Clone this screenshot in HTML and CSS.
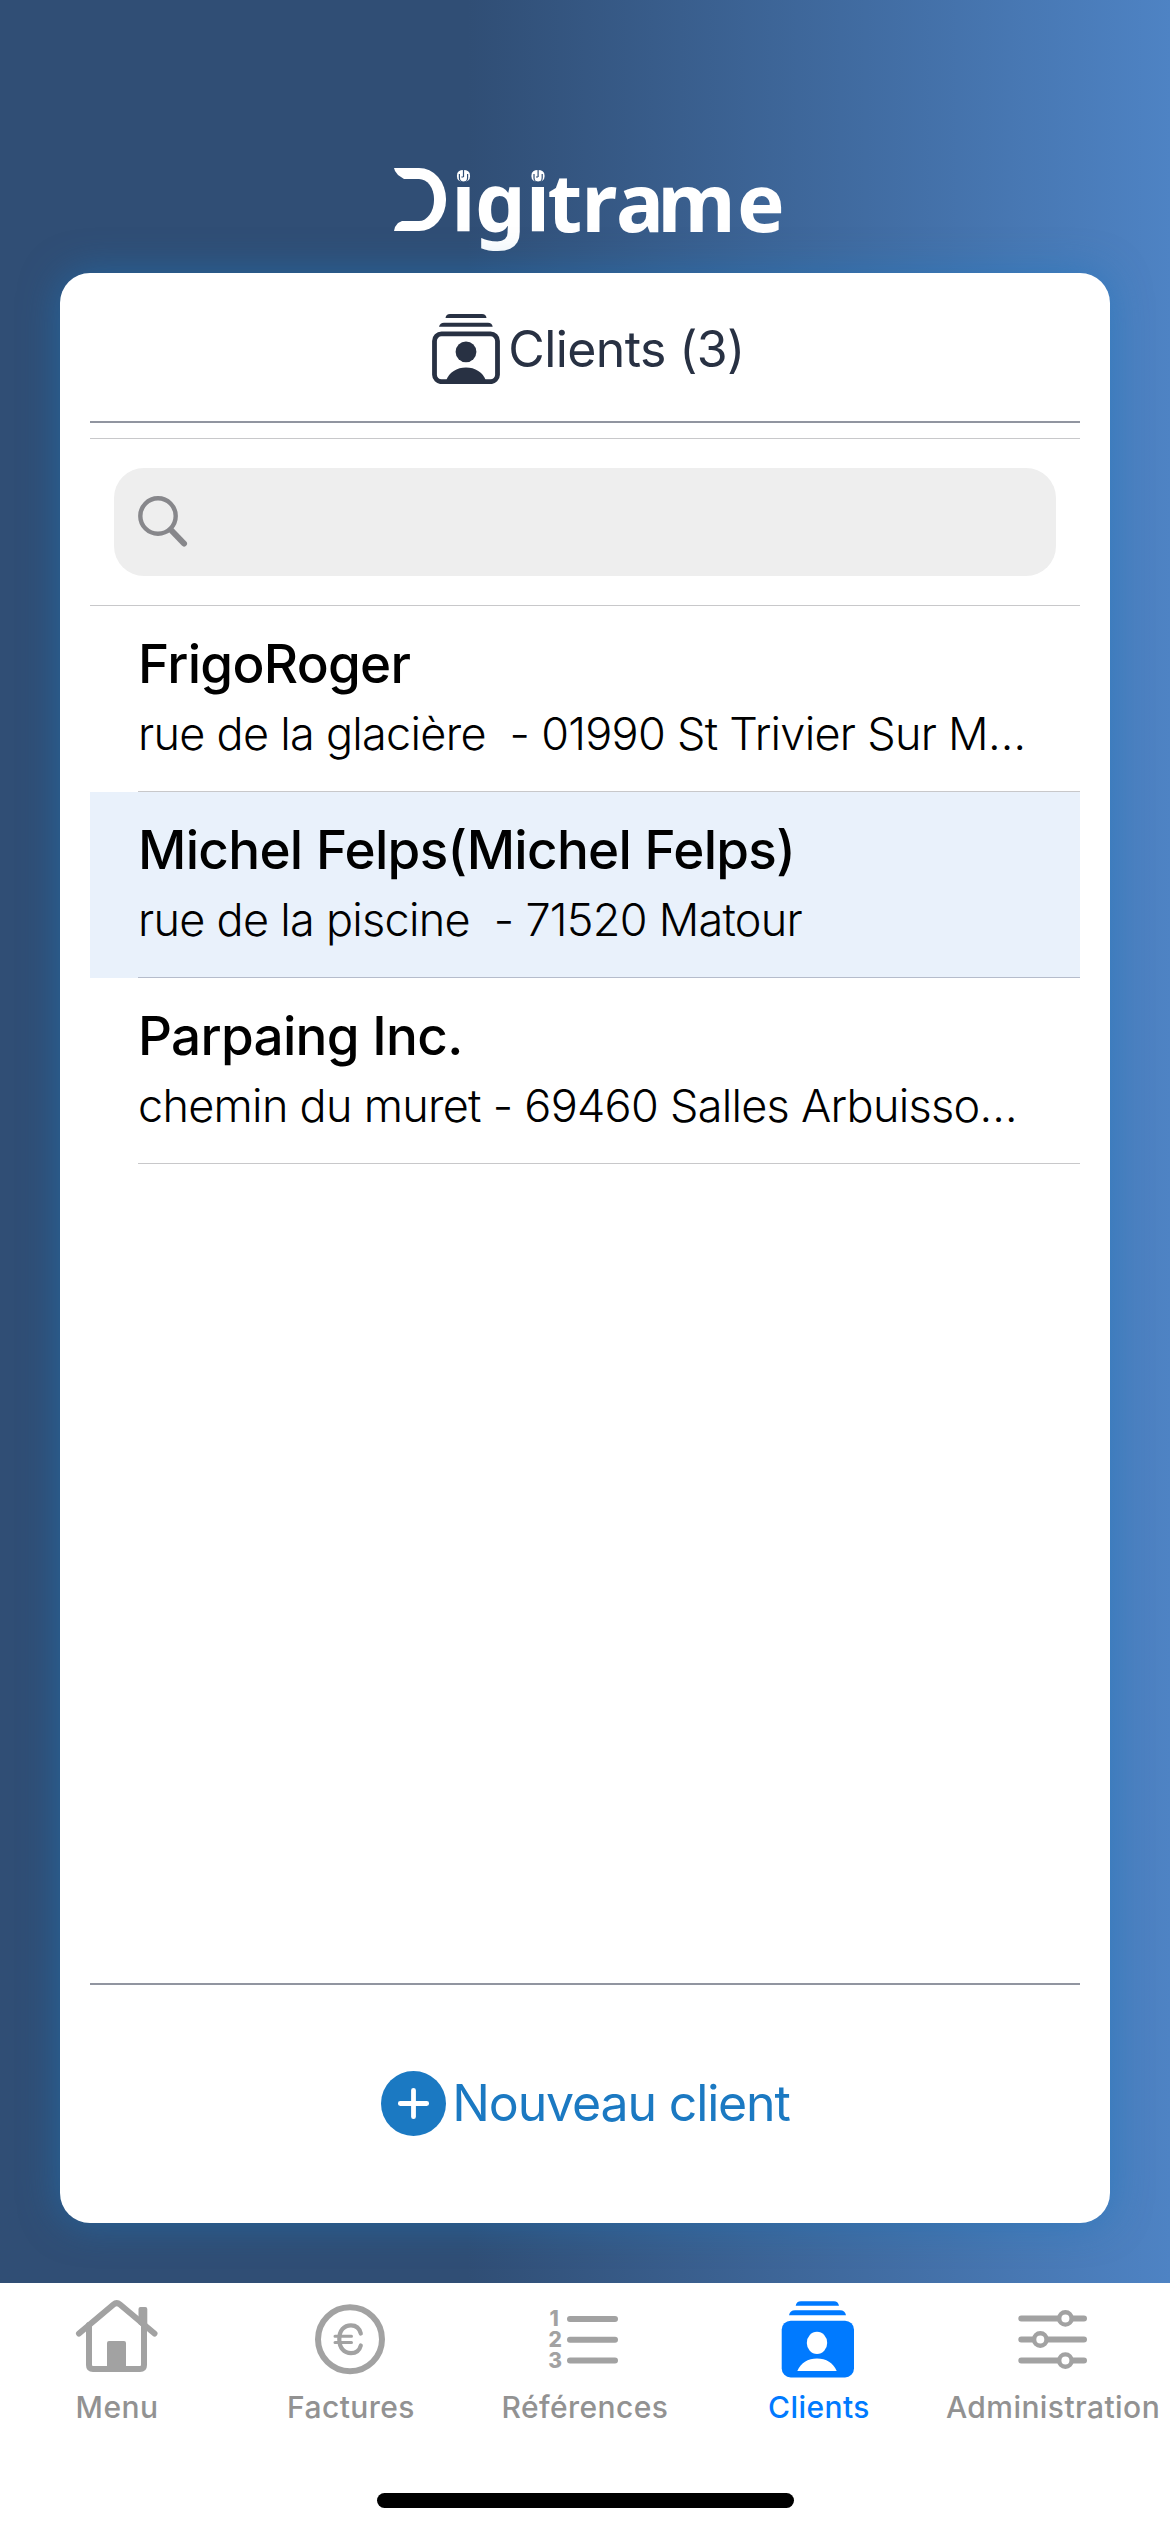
FILE: index.html
```
<!DOCTYPE html>
<html lang="fr">

<head>
    <meta charset="UTF-8">
    <meta name="viewport" content="width=device-width, initial-scale=1.0">
    <title>Digitrame</title>
    <link rel="stylesheet" href="styles.css">
</head>

<body>
    <div class="page">
        <!-- logo -->
        <div class="logo">
            <i class="logo-d"></i>
            <svg class="logo-text" width="360" height="104" viewBox="0 -14 360 104">
                <text x="5.5 29 80 101.5 135.5 170 211.5 291" y="63.7">igitrame</text>
                <g class="rings">
                    <path d="M13.4 6v4a4.1 4.1 0 0 0 8.2 0V6M17.5 2v7M15.4 9h2" />
                    <path d="M88 6v4a4.1 4.1 0 0 0 8.2 0V6M92.1 2v7M90 9h2" />
                </g>
            </svg>
        </div>

        <div class="card">
            <div class="title">
                <svg width="68" height="70" viewBox="0 0 68 70">
                    <path d="M13.5 4Q14 0 18 0H50Q54 0 54.5 4ZM7 12.7Q8 8.7 12 8.7H56Q60 8.7 60.7 12.7Z" />
                    <rect class="frame" x="2.5" y="19.9" width="63" height="47.8" rx="7" />
                    <circle cx="34" cy="37.8" r="10.4" />
                    <path d="M14 67C17 58 25 53.5 34 53.5S51 58 54 67Z" />
                </svg>
                <span>Clients (3)</span>
            </div>

            <div class="search">
                <div class="search-box">
                    <svg width="54" height="54" viewBox="0 0 54 54">
                        <circle cx="20" cy="21" r="17.7" />
                        <path d="M33 35L46 48.5" />
                    </svg>
                </div>
            </div>

            <ul class="list">
                <li>
                    <div class="item">
                        <h3>FrigoRoger</h3>
                        <p>rue de la glacière&nbsp; - 01990 St Trivier Sur M…</p>
                    </div>
                </li>
                <li class="active">
                    <div class="item">
                        <h3>Michel Felps(Michel Felps)</h3>
                        <p>rue de la piscine&nbsp; - 71520 Matour</p>
                    </div>
                </li>
                <li>
                    <div class="item">
                        <h3>Parpaing Inc.</h3>
                        <p>chemin du muret - 69460 Salles Arbuisso…</p>
                    </div>
                </li>
            </ul>

            <div class="add">
                <svg width="65" height="65" viewBox="0 0 65 65">
                    <circle cx="32.5" cy="32.5" r="32.5" />
                    <path d="M32.5 19.3v26.4M19.3 32.5h26.4" />
                </svg>
                <span>Nouveau client</span>
            </div>
        </div>

        <!-- tab bar -->
        <div class="tabs">
            <a class="tab">
                <svg width="100" height="106" viewBox="0 0 100 106">
                    <path class="line" d="M12 50.5L46.5 21.5Q49.7 18.7 53 21.5L87.5 50.5" />
                    <path class="line" d="M22 42V82Q22 86 26 86H73Q77 86 77 82V42" />
                    <path d="M40 86V60Q40 58 42 58H57Q59 58 59 60V86ZM71.5 41V26Q71.5 24 73.5 24H78.3Q80.3 24 80.3 26V48Z" />
                </svg>
                <span>Menu</span>
            </a>
            <a class="tab">
                <svg width="100" height="106" viewBox="0 0 100 106">
                    <circle class="line" cx="49" cy="56.2" r="32" />
                    <path class="euro" d="M59.8 50.5C58.5 45 55 42.3 50 42.3C43 42.3 38.3 47.5 38.3 56.2S43 70.2 50 70.2C55 70.2 58.5 67.5 59.8 62.5" />
                    <path class="euro thin" d="M34 53.2H50.5M34 59.4H50.5" />
                </svg>
                <span>Factures</span>
            </a>
            <a class="tab">
                <svg width="100" height="106" viewBox="0 0 100 106">
                    <text x="14.5" y="42.7">1</text>
                    <text x="13.5" y="63.7">2</text>
                    <text x="13.3" y="84.5">3</text>
                    <path class="line" d="M35 36H80M35 56.7H80M35 77.4H80" />
                </svg>
                <span>Références</span>
            </a>
            <a class="tab on">
                <svg width="100" height="106" viewBox="0 0 100 106">
                    <path d="M26.7 22.7Q27.5 18.3 32 18.3H65Q69 18.3 70 22.7ZM20 32.3Q21 27.3 26 27.3H71Q76 27.3 77 32.3Z" />
                    <rect x="12.7" y="37.7" width="72.3" height="56.8" rx="9" />
                    <ellipse class="white" cx="48" cy="59.9" rx="10.2" ry="11.2" />
                    <path class="white" d="M28.3 88C31.5 80 39 75.5 48 75.5S64.5 80 67.7 88Z" />
                </svg>
                <span>Clients</span>
            </a>
            <a class="tab">
                <svg width="100" height="106" viewBox="0 0 100 106">
                    <path class="line" d="M18.3 35.4H81M18.3 56.5H81M18.3 77.6H81" />
                    <circle class="knob" cx="62.4" cy="35.4" r="6.2" />
                    <circle class="knob" cx="37.3" cy="56.5" r="6.2" />
                    <circle class="knob" cx="62.4" cy="77.6" r="6.2" />
                </svg>
                <span>Administration</span>
            </a>
        </div>
        <div class="home"><i></i></div>
    </div>
</body>

</html>
```
FILE: styles.css
```
html,
body,
ul,
h3,
p {
    margin: 0;
    padding: 0;
}

* {
    box-sizing: border-box;
}

body {
    width: 1170px;
    height: 2532px;
    overflow: hidden;
    font-family: "Inter", "Liberation Sans", sans-serif;
}

svg {
    display: block;
    flex: none;
}

.page {
    display: flex;
    flex-direction: column;
    height: 2532px;
    background: linear-gradient(90deg, #304e75 0%, #304e75 40%, #4e83c4 100%);
}

/* logo */
.logo {
    display: flex;
    height: 273px;
    padding: 168px 0 0 394px;
}

.logo-d {
    width: 52px;
    height: 63px;
    border: solid #fff;
    border-width: 11px 12.5px 10px 0;
    border-radius: 0 27px 27px 0 / 0 31px 31px 0;
    clip-path: polygon(0 0, 100% 0, 100% 100%, 0 100%, 1px 59px, 4px 55px, 10px 52px, 30px 50px, 30px 13px, 10px 11px, 4px 7px, 1px 3px);
}

.logo-text {
    margin-top: -14px;
    overflow: visible;
}

.logo-text text {
    font: bold 80px "Noto Sans", sans-serif;
    fill: #fff;
}

.rings path {
    fill: none;
    stroke: #304e75;
    stroke-width: 1.2;
}

/* card */
.card {
    display: flex;
    flex-direction: column;
    height: 1950px;
    margin: 0 60px;
    padding: 0 30px;
    background: #fff;
    border-radius: 30px;
    box-shadow: 0 0 38px rgba(26, 121, 192, 0.52);
}

.title {
    display: flex;
    align-items: center;
    justify-content: center;
    gap: 8px;
    height: 150px;
    padding: 3px 0 0 7px;
    border-bottom: 2px solid #9195a0;
    font-size: 50px;
    letter-spacing: -0.6px;
    color: #283143;
}

.title svg {
    fill: #283143;
}

.title .frame {
    fill: none;
    stroke: #283143;
    stroke-width: 4.8;
}

.search {
    height: 168px;
    margin-top: 15px;
    padding: 29px 24px;
    border-top: 1px solid #c8c8ca;
    border-bottom: 1px solid #c8c8ca;
}

.search-box {
    height: 108px;
    padding: 27px 24px;
    border-radius: 30px;
    background: #eee;
}

.search-box svg {
    fill: none;
    stroke: #87878b;
    stroke-width: 4.4;
}

.search-box path {
    stroke-width: 6;
    stroke-linecap: round;
}

.list {
    flex: 1;
    list-style: none;
}

.list li {
    height: 186px;
    padding-left: 48px;
}

.list .active {
    background: #e9f1fb;
}

.item {
    height: 186px;
    padding-top: 26px;
    border-bottom: 1px solid #c8c8ca;
    color: #000;
    white-space: nowrap;
}

.active .item {
    border-color: #b5bccb;
}

.item h3 {
    font-size: 53px;
    font-weight: 500;
    line-height: 64px;
    letter-spacing: -0.7px;
}

.item p {
    margin-top: 10px;
    font-size: 45px;
    font-weight: 300;
    line-height: 56px;
    letter-spacing: -0.72px;
}

.add {
    display: flex;
    align-items: center;
    justify-content: center;
    gap: 6px;
    height: 240px;
    padding: 0 0 2px 1px;
    border-top: 2px solid #9195a0;
    font-size: 50px;
    letter-spacing: -1.15px;
    color: #1b79c2;
}

.add svg {
    fill: #1b79c2;
}

.add path {
    stroke: #fff;
    stroke-width: 4.8;
    stroke-linecap: round;
}

/* tab bar */
.tabs {
    display: flex;
    height: 190px;
    margin-top: 60px;
    background: #fff;
}

.tab {
    display: flex;
    flex-direction: column;
    align-items: center;
    width: 234px;
    font-size: 30px;
    font-weight: 500;
    line-height: 36px;
    letter-spacing: 0.43px;
    color: #929292;
}

.tab svg {
    fill: #a2a2a2;
}

.tab .line {
    fill: none;
    stroke: #a2a2a2;
    stroke-width: 6;
    stroke-linecap: round;
    stroke-linejoin: round;
}

.tab .euro {
    fill: none;
    stroke: #a2a2a2;
    stroke-width: 4.2;
    stroke-linecap: round;
}

.tab .thin {
    stroke-width: 3;
}

.tab text {
    font-size: 21px;
    font-weight: 800;
    letter-spacing: 0;
}

.tab .knob {
    fill: #fff;
    stroke: #a2a2a2;
    stroke-width: 4.4;
}

.tab.on {
    color: #007aff;
}

.tab.on svg {
    fill: #007aff;
}

.tab .white {
    fill: #fff;
}

.home {
    display: flex;
    flex: 1;
    justify-content: center;
    padding-top: 20px;
    background: #fff;
}

.home i {
    width: 417px;
    height: 15px;
    border-radius: 8px;
    background: #000;
}
```
